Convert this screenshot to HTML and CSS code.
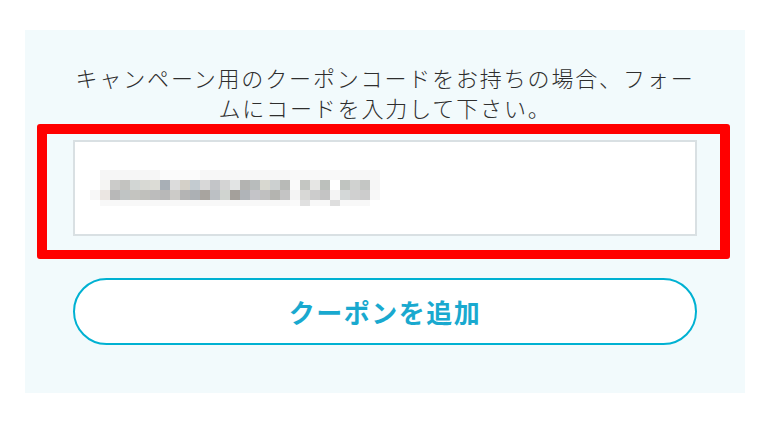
FILE: index.html
```html
<!DOCTYPE html>
<html lang="ja">
<head>
<meta charset="utf-8">
<link rel="stylesheet" href="styles.css">
</head>
<body>
<section class="coupon-panel">
  <p class="coupon-note">キャンペーン用のクーポンコードをお持ちの場合、フォー<br>ムにコードを入力して下さい。</p>
  <div class="coupon-field">
    <div class="coupon-input">
      <div class="mosaic">
        <div class="mosaic-row row-a"></div>
        <div class="mosaic-row row-b"></div>
        <div class="mosaic-row row-c"></div>
        <div class="mosaic-row row-d"></div>
      </div>
    </div>
  </div>
  <button class="coupon-button" type="button">クーポンを追加</button>
</section>
</body>
</html>
```

FILE: styles.css
```css
* { box-sizing: border-box; }

html, body {
  margin: 0;
  padding: 0;
  background: #ffffff;
}

body {
  font-family: "Noto Sans CJK JP", "Noto Sans", sans-serif;
  width: 770px;
  height: 432px;
  overflow: hidden;
  padding-top: 30px;
  padding-left: 25px;
}

.coupon-panel {
  width: 720px;
  background: #f2fafc;
  padding: 32px 48px 48px;
  display: flex;
  flex-direction: column;
}

.coupon-note {
  margin: 0 -10px;
  font-size: 22px;
  line-height: 30px;
  letter-spacing: 1.85px;
  color: #2e2e2e;
  text-align: center;
  font-weight: 300;
  white-space: nowrap;
}

.coupon-field {
  position: relative;
  margin-top: 18px;
}

.coupon-field::after {
  content: "";
  position: absolute;
  top: -16px;
  left: -36px;
  right: -33px;
  bottom: -23px;
  border: 10px solid #ff0000;
  border-bottom-width: 9px;
  border-radius: 3px;
  pointer-events: none;
}

.coupon-input {
  height: 96px;
  background: #ffffff;
  border: 2px solid #d9e0e3;
  padding: 28px 0 0 15px;
}

.mosaic {
  width: 290px;
  display: flex;
  flex-direction: column;
  filter: blur(0.6px);
}

.mosaic-row {
  height: 10px;
}

.row-a {
  height: 10px;
  background: linear-gradient(to right,
    #ffffff 0 10px, #f6f6f6 10px 70px, #fbfbfb 70px 110px, #f7f7f7 110px 200px,
    #f9f9f9 200px 260px, #f7f7f7 260px 290px);
}

.row-b {
  background: linear-gradient(to right,
    #ffffff 0 10px,
    #f5f5f3 10px 20px, #cbcbc9 20px 30px, #c3c3c0 30px 40px, #d2d6d4 40px 50px,
    #d8d9d4 50px 60px, #dcdcd6 60px 70px, #a8afb6 70px 80px, #dcdcdc 80px 90px,
    #d4d0c8 90px 100px, #c3cbd0 100px 110px, #d8d8d8 110px 120px, #c3c5c8 120px 130px,
    #d4d4d4 130px 140px, #e2e4e4 140px 150px, #b3b3b1 150px 160px, #b8bcbc 160px 170px,
    #d8d8d0 170px 180px, #ccd0d0 180px 190px, #b8bab7 190px 200px, #fafafa 200px 210px,
    #c4c6c2 210px 220px, #e6e6e4 220px 230px, #bcc0bc 230px 240px, #ffffff 240px 250px,
    #c0c4c0 250px 260px, #d0d2d0 260px 270px, #c4c6c4 270px 280px, #f6f6f6 280px 290px);
}

.row-c {
  background: linear-gradient(to right,
    #f8f8f8 0 10px,
    #ebe6e2 10px 20px, #b8b8b8 20px 30px, #c0c4c4 30px 40px, #c4c4c0 40px 50px,
    #c0c0bc 50px 60px, #bcbcbc 60px 70px, #b8b8b8 70px 80px, #cccbc8 80px 90px,
    #b4b4b4 90px 100px, #acb0b4 100px 110px, #a8a49f 110px 120px, #bcc0c4 120px 130px,
    #d0d4d0 130px 140px, #a4a09b 140px 150px, #b0b4b8 150px 160px, #c4c4c8 160px 170px,
    #c0c0c0 170px 180px, #b4b4b0 180px 190px, #c4c4c4 190px 200px, #f4f4f4 200px 210px,
    #d8d8d6 210px 220px, #cccccc 220px 230px, #c4c4c4 230px 240px, #f4f4f4 240px 250px,
    #d4d8d8 250px 260px, #d0d0d0 260px 270px, #cccccc 270px 280px, #f8f8f8 280px 290px);
}

.row-d {
  height: 6px;
  background: linear-gradient(to right,
    #ffffff 0 10px, #f8f8f8 10px 200px, #fafafa 200px 210px, #e0e0e0 210px 220px,
    #f8f8f8 220px 240px, #dedede 240px 250px, #f8f8f8 250px 280px, #ffffff 280px 290px);
}

.coupon-button {
  margin-top: 42px;
  height: 67px;
  width: 100%;
  background: #ffffff;
  border: 2px solid #00b1d2;
  border-radius: 34px;
  color: #19a9cf;
  font-family: "Noto Sans CJK JP", "Noto Sans", sans-serif;
  font-size: 26px;
  font-weight: 700;
  letter-spacing: 1.5px;
  padding: 0;
  cursor: pointer;
}
```
